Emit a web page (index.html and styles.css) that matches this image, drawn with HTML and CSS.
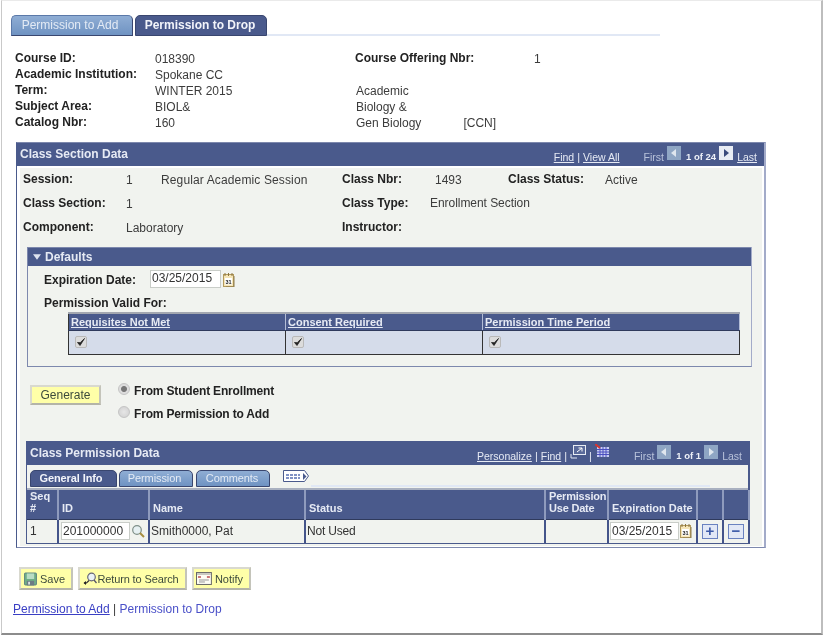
FILE: index.html
```html
<!DOCTYPE html>
<html lang="en">
<head>
<meta charset="utf-8">
<title>Permission to Drop</title>
<link rel="stylesheet" href="styles.css">
</head>
<body>
<div class="frame">
  <div class="tabs page-tabs">
    <a class="tab">Permission to Add</a>
    <a class="tab active">Permission to Drop</a>
    <span class="tab-line"></span>
  </div>

  <div class="info">
    <b>Course ID:</b><span>018390</span><b>Course Offering Nbr:</b><span>1</span>
    <b>Academic Institution:</b><span>Spokane CC</span><span></span><span></span>
    <b>Term:</b><span>WINTER 2015</span><span class="col3">Academic</span><span></span>
    <b>Subject Area:</b><span>BIOL&amp;</span><span class="col3">Biology &amp;</span><span></span>
    <b>Catalog Nbr:</b><span>160</span><span class="col3 gen">Gen Biology<i>[CCN]</i></span><span></span>
  </div>

  <section class="section">
    <header class="bar">
      <strong>Class Section Data</strong>
      <nav class="pager">
        <a>Find</a><em>|</em><a>View All</a>
        <span class="first">First</span>
        <svg class="arrow" viewBox="0 0 14 14"><rect width="14" height="14" fill="#8fa6c4"/><path d="M9 3v8L4 7z" fill="#dfe6ee"/></svg>
        <b>1 of 24</b>
        <svg class="arrow" viewBox="0 0 14 14"><rect width="14" height="14" fill="#e8ecf4"/><path d="M5 3v8l5-4z" fill="#3a4a7c"/></svg>
        <a class="last">Last</a>
      </nav>
    </header>
    <div class="panel">
      <div class="facts">
        <b>Session:</b><span>1</span><span class="session">Regular Academic Session</span><b>Class Nbr:</b><span>1493</span><b>Class Status:</b><span>Active</span>
        <b>Class Section:</b><span>1</span><span></span><b>Class Type:</b><span class="enroll">Enrollment Section</span><span></span><span></span>
      </div>
      <div class="facts third">
        <b>Component:</b><span>Laboratory</span><b>Instructor:</b>
      </div>

      <section class="defaults">
        <header class="bar small"><svg class="twisty" viewBox="0 0 9 6"><path d="M0 0h9L4.5 6z" fill="#dfe4f0"/></svg><strong>Defaults</strong></header>
        <div class="exp">
          <b>Expiration Date:</b>
          <span class="field date">03/25/2015</span>
          <svg class="cal" viewBox="0 0 12 14"><rect x=".5" y="1.5" width="10" height="12" fill="#f6e6b8" stroke="#b39a5c"/><path d="M2 0v3M5.500 0v3M9 0v3" stroke="#8a7440"/><rect x="2" y="5" width="7" height="6.500" fill="#fff"/><text x="5.500" y="10.700" class="cal-num">31</text><path d="M11 3v11H3" fill="none" stroke="#8f7c4c"/></svg>
        </div>
        <b class="valid">Permission Valid For:</b>
        <table class="grid valid-grid">
          <thead><tr><th class="c1"><a>Requisites Not Met</a></th><th class="c2"><a>Consent Required</a></th><th><a>Permission Time Period</a></th></tr></thead>
          <tbody><tr>
            <td><span class="check"><svg viewBox="0 0 10 10"><path d="M1.500 5.500l2.500 3 4.500-7-4.300 4.200z" fill="#222" stroke="#222" stroke-width=".8"/></svg></span></td>
            <td><span class="check"><svg viewBox="0 0 10 10"><path d="M1.500 5.500l2.500 3 4.500-7-4.300 4.200z" fill="#222" stroke="#222" stroke-width=".8"/></svg></span></td>
            <td><span class="check"><svg viewBox="0 0 10 10"><path d="M1.500 5.500l2.500 3 4.500-7-4.300 4.200z" fill="#222" stroke="#222" stroke-width=".8"/></svg></span></td>
          </tr></tbody>
        </table>
      </section>

      <div class="generate">
        <button class="btn gen-btn" type="button">Generate</button>
        <div class="radios">
          <label><span class="radio on"></span><b>From Student Enrollment</b></label>
          <label><span class="radio"></span><b>From Permission to Add</b></label>
        </div>
      </div>

      <section class="perm">
        <header class="bar">
          <strong>Class Permission Data</strong>
          <nav class="pager">
            <a>Personalize</a><em>|</em><a>Find</a><em>|</em>
            <svg class="tool" viewBox="0 0 16 14"><path d="M1 9v4h6" fill="none" stroke="#dfe4f0"/><rect x="3.500" y=".5" width="12" height="9" fill="#5a6a9a" stroke="#e8ecf4"/><path d="M7 7l5-4M8.500 3H12v3.500" fill="none" stroke="#fff"/></svg>
            <em>|</em>
            <svg class="tool grid-tool" viewBox="0 0 14 14"><rect x="2" y="3" width="12" height="10" fill="#c8cef0"/><path d="M2 5.500h12M2 8h12M2 10.500h12M5 3v10M8 3v10M11 3v10" stroke="#4a4fc0"/><path d="M0 0l5 4" stroke="#d9332f" stroke-width="2"/></svg>
            <span class="first wide">First</span>
            <svg class="arrow" viewBox="0 0 14 14"><rect width="14" height="14" fill="#8fa6c4"/><path d="M9 3v8L4 7z" fill="#dfe6ee"/></svg>
            <b>1 of 1</b>
            <svg class="arrow" viewBox="0 0 14 14"><rect width="14" height="14" fill="#8fa6c4"/><path d="M5 3v8l5-4z" fill="#dfe6ee"/></svg>
            <span class="first lastdim">Last</span>
          </nav>
        </header>
        <div class="tabs sub-tabs">
          <a class="tab active">General Info</a>
          <a class="tab">Permission</a>
          <a class="tab">Comments</a>
          <svg class="more" viewBox="0 0 27 14"><path d="M.5 1.500h21l4 5.500-4 5.500H.500z" fill="#fff" stroke="#4a5a8c"/><path d="M3 5h14v5H3z" fill="#8092c4"/><path d="M6.500 5v5M10.500 5v5M14.500 5v5M3 7.500h14" stroke="#fff"/><path d="M20 4l3.500 3.500L20 11z" fill="#4a5a8c"/></svg>
          <span class="tab-line"></span>
        </div>
        <table class="grid data-grid">
          <colgroup><col class="w-seq"><col class="w-id"><col class="w-name"><col class="w-status"><col class="w-use"><col class="w-exp"><col class="w-btn"><col class="w-btn"></colgroup>
          <thead><tr><th>Seq<br>#</th><th>ID</th><th>Name</th><th>Status</th><th class="use">Permission<br>Use Date</th><th>Expiration Date</th><th></th><th></th></tr></thead>
          <tbody><tr>
            <td>1</td>
            <td class="cell-flex"><span class="field id">201000000</span><svg class="lens" viewBox="0 0 14 14"><circle cx="6" cy="6" r="4.300" fill="#e6f0f2" stroke="#7f8f88" stroke-width="1.200"/><path d="M9 9l4 4" stroke="#a88f40" stroke-width="2"/></svg></td>
            <td>Smith0000, Pat</td>
            <td class="tight">Not Used</td>
            <td></td>
            <td class="cell-flex"><span class="field date2">03/25/2015</span><svg class="cal" viewBox="0 0 12 14"><rect x=".5" y="1.500" width="10" height="12" fill="#f6e6b8" stroke="#b39a5c"/><path d="M2 0v3M5.500 0v3M9 0v3" stroke="#8a7440"/><rect x="2" y="5" width="7" height="6.500" fill="#fff"/><text x="5.500" y="10.700" class="cal-num">31</text><path d="M11 3v11H3" fill="none" stroke="#8f7c4c"/></svg></td>
            <td class="cell-btn"><span class="rowbtn">+</span></td>
            <td class="cell-btn"><span class="rowbtn">−</span></td>
          </tr></tbody>
        </table>
      </section>
    </div>
  </section>

  <div class="actions">
    <button class="btn save" type="button"><svg class="ico" viewBox="0 0 14 14"><rect x=".5" y=".5" width="13" height="13" rx="1" fill="#6fae86" stroke="#5a7f80"/><rect x="3" y="1" width="8" height="6" fill="#b8dcc4"/><rect x="3" y="9" width="8" height="5" fill="#6c7c84"/><rect x="4.500" y="10" width="2" height="3" fill="#d8e0e0"/></svg>Save</button>
    <button class="btn ret" type="button"><svg class="ico" viewBox="0 0 14 14"><circle cx="8.500" cy="5" r="3.800" fill="#eaf2f6" stroke="#667" stroke-width="1.200"/><path d="M11 8l2.500 3" stroke="#556" stroke-width="1.300"/><path d="M6 8.500l-2.500 2.500H1" fill="none" stroke="#333" stroke-width="1.200"/><path d="M.5 11l2.500-2v4z" fill="#222"/></svg>Return to Search</button>
    <button class="btn notify" type="button"><svg class="ico note" viewBox="0 0 16 13"><rect x=".5" y=".5" width="15" height="12" fill="#fdfdf4" stroke="#666"/><path d="M1 1h14v2H1z" fill="#c9c9c0"/><rect x="2" y="4" width="3" height="2" fill="#c77"/><rect x="11" y="4" width="3" height="2" fill="#c77"/><path d="M3 8h10M3 10h6" stroke="#999"/></svg>Notify</button>
  </div>

  <p class="links"><a class="visited">Permission to Add</a> | <a>Permission to Drop</a></p>
</div>
</body>
</html>
```

FILE: styles.css
```css
* { box-sizing: border-box; }
html, body { margin: 0; background: #fff; }
body { font: 12px/16px "Liberation Sans", Arial, sans-serif; color: #3c3c3c; }
b, strong { font-weight: 700; }

.frame {
  width: 822px; height: 635px; margin-left: 1px; position: relative;
  border: 1px solid #c9c9c9; border-width: 1px 2px 2px 1px;
  border-color: #eaeaea #bdbdbd #8c8c8c #c9c9c9;
  background: #fff;
  padding-top: 14px;
  filter: blur(.3px);
}

.tabs { display: flex; align-items: flex-end; }
.tab {
  display: block; border-radius: 5px 5px 0 0; text-align: center;
  background: linear-gradient(#8fadd4, #6f93c2); color: #e4ebf5;
  border: 1px solid #5a78a8; border-bottom: 1px solid #39466f;
  border-right-color: #39466f;
}
.tab.active {
  background: #4a5a8c; color: #f2f4fa; font-weight: 700;
  border-color: #39466f;
}
.tab-line { height: 2px; background: #e1e8f5; flex: none; }

.page-tabs { height: 21px; padding-left: 9px; }
.page-tabs .tab { height: 21px; line-height: 19px; }
.page-tabs .tab:nth-child(1) { width: 122px; margin-right: 2px; padding-right: 4px; }
.page-tabs .tab:nth-child(2) { width: 132px; padding-right: 2px; }
.page-tabs .tab-line { width: 393px; }

.info {
  display: grid; grid-template-columns: 140px 200px 179px 1fr; grid-auto-rows: 16px;
  margin: 14px 0 0 13px;
}
.info b { color: #222; }
.info span { color: #3c3c3c; padding-top: 1px; }
.info .col3 { padding-left: 1px; }
.gen i { font-style: normal; margin-left: 42px; }

.section {
  width: 750px; margin: 12px 0 0 14px; height: 406px;
  border: 1px solid #4a5a8c; border-right: 2px solid #a3abc9; border-bottom: 1px solid #7d88ad;
  border-top-color: #7d88ad; padding-bottom: 3px; background: #fff;
}
.bar {
  display: flex; justify-content: space-between; align-items: center;
  background: #4a5a8c; color: #e6eaf4; height: 23px; padding: 0 7px 1px 3px;
}
.pager { display: flex; align-items: center; font-size: 10.500px; color: #e6eaf4; white-space: nowrap; padding-top: 5px; }
.pager a { text-decoration: underline; }
.pager em { font-style: normal; margin: 0 3px; font-size: 11px; }
.pager .first { color: #b8c2da; margin-left: 24px; margin-right: 3px; }
.pager .first.wide { margin-left: 25px; }
.pager .first.lastdim { margin-left: 4px; margin-right: 0; }
.pager b { font-size: 9.500px; margin: 0 3px 0 5px; color: #eef1f8; }
.pager .last { margin-left: 4px; }
.arrow { width: 14px; height: 14px; margin-top: -8px; }
.tool { width: 16px; height: 14px; margin-top: -8px; }
.grid-tool { width: 14px; margin-top: -10px; }

.panel {
  height: 378px; margin: 2px 2px 0 3px; background: #f1f3ef; padding-top: 3px;
}
.facts {
  display: grid; height: 48px; grid-auto-rows: 24px; align-items: start;
  grid-template-columns: 103px 35px 181px 93px 73px 97px 1fr;
  padding-left: 3px; white-space: nowrap;
}
.facts b { color: #222; }
.facts span { padding-top: 1px; }
.session { letter-spacing: .13px; }
.tight { letter-spacing: -.2px; }
.facts .enroll { margin-left: -5px; padding-top: 0; letter-spacing: -.05px; }
.facts.third { height: 25px; grid-auto-rows: 25px; grid-template-columns: 103px 216px 1fr; }

.defaults {
  width: 725px; height: 120px; margin: 3px 0 0 7px;
  border: 1px solid #7d88ad; border-top: 0; border-right-color: #a3abc9;
}
.bar.small { height: 19px; justify-content: flex-start; border-top: 1px solid #7d88ad; padding: 0 0 0 5px; gap: 4px; }
.twisty { width: 8px; height: 6px; }
.exp { display: flex; align-items: center; padding-left: 16px; height: 24px; margin-top: 2px; }
.exp b { width: 106px; color: #222; }
.field {
  display: block; background: #fff; border: 1px solid #c9cdc8; color: #333;
  height: 18px; line-height: 15px; padding-left: 1px;
}
.field.date { width: 71px; margin-top: -2px; }
.cal { width: 12px; height: 14px; margin-left: 2px; flex: none; }
.cal-num { font: 700 5.500px "Liberation Sans", Arial, sans-serif; fill: #222; text-anchor: middle; }
.valid { display: block; margin: 3px 0 0 16px; color: #222; }

.grid { border-collapse: collapse; table-layout: fixed; }
.grid th { background: #4a5a8c; color: #e6eaf4; text-align: left; padding: 0 3px; font-size: 11px; font-weight: 700; }
.grid th a { text-decoration: underline; }
.valid-grid { width: 672px; margin: 1px 0 0 40px; border: 1px solid #333; border-top: 2px solid #a3a7b0; }
.valid-grid th { height: 17px; border-right: 1px solid #b4bdd6; border-bottom: 1px solid #2f3a5c; line-height: 14px; padding-left: 2px; }
.valid-grid td { height: 24px; background: #d5dcea; border-right: 1px solid #333; padding: 0 6px; }
.valid-grid .c1 { width: 217px; }
.valid-grid .c2 { width: 197px; }
.check {
  display: block; width: 12px; height: 12px; background: #dcdcdc;
  border: 1px solid #b9b9b9; border-radius: 2px;
}
.check svg { display: block; width: 10px; height: 10px; }

.generate { display: flex; margin: 11px 0 0 10px; height: 63px; }
.btn {
  display: flex; align-items: center; justify-content: center;
  font: 12px "Liberation Sans", Arial, sans-serif; color: #3c4a3c;
  background: #ffffa8; border: 2px solid #d9d9cf; border-bottom-color: #b4b4a8; border-right-color: #c4c4ba;
  padding: 0 6px;
}
.gen-btn { width: 71px; height: 20px; margin-top: 7px; }
.radios { margin-left: 17px; display: flex; flex-direction: column; gap: 7px; padding-top: 5px; }
.radios label { display: flex; align-items: center; gap: 4px; height: 16px; color: #222; letter-spacing: -.17px; }
.radio {
  width: 12px; height: 12px; border-radius: 50%; border: 1px solid #c4c4c4; margin-top: -4px;
  background: radial-gradient(circle, #e6e6e6, #cfcfcf);
}
.radio.on { background: radial-gradient(circle, #777 0 2.5px, #ddd 3.500px); }

.perm { width: 724px; height: 103px; margin: 0 0 0 6px; background: #4a5a8c; padding-bottom: 1px; }
.perm .bar { height: 24px; padding: 0 8px 0 4px; }
.sub-tabs { height: 25px; background: #f1f3ef; margin-right: 2px; padding-left: 3px; margin-left: 1px; border-bottom: 2px solid #a9b0c0; position: relative; }
.sub-tabs .tab { height: 17px; line-height: 14px; font-size: 11px; margin-right: 2px; margin-bottom: 1px; letter-spacing: -.1px; border-color: #39466f; }
.sub-tabs .tab:nth-child(1) { width: 87px; padding-right: 5px; }
.sub-tabs .tab:nth-child(2) { width: 74px; margin-right: 3px; padding-right: 3px; }
.sub-tabs .tab:nth-child(3) { width: 74px; padding-right: 2px; }
.more { width: 27px; height: 14px; margin: 0 0 5px 11px; }
.sub-tabs .tab-line { position: absolute; left: 284px; width: 399px; bottom: 1px; }

.data-grid { width: 723px; margin-left: 1px; }
.w-seq { width: 31px; } .w-id { width: 91px; } .w-name { width: 156px; } .w-status { width: 240px; }
.w-use { width: 63px; } .w-exp { width: 89px; } .w-btn { width: 26px; }
.data-grid th { height: 29px; vertical-align: bottom; line-height: 12px; border-right: 2px solid #8f9bbd; border-bottom: 1px solid #2f3a5c; padding: 0 2px 5px 3px; }
.data-grid th.use { letter-spacing: -.2px; }
.data-grid td { height: 23px; background: #f1f3ef; border-right: 2px solid #44548a; padding: 0 1px 1px; color: #333; white-space: nowrap; }
.data-grid td:first-child { padding-left: 3px; }
.cell-flex .field { display: inline-block; vertical-align: middle; height: 18px; line-height: 16px; font-size: 12px; }
.field.id { width: 69px; margin-left: 1px; }
.field.date2 { width: 69px; }
.lens { width: 14px; height: 14px; vertical-align: middle; margin-left: 1px; }
.cell-flex .cal { vertical-align: middle; margin-left: 1px; }
.cell-btn { text-align: center; }
.rowbtn {
  display: inline-block; width: 16px; height: 15px; line-height: 11px; background: #e2e8f6;
  border: 1px solid #6a82c0; color: #3c5aa8; font-size: 15px; font-weight: 700; vertical-align: middle;
}

.actions { display: flex; gap: 5px; margin: 19px 0 0 17px; }
.actions .btn { height: 23px; padding: 0 6px 0 3px; font-size: 11px; }
.actions .save { width: 54px; }
.actions .ret { width: 109px; }
.actions .notify { width: 59px; }
.ico { width: 14px; height: 14px; margin-right: 3px; }
.note { width: 16px; height: 13px; margin-left: -1px; margin-right: 3px; }
.ret { letter-spacing: -.12px; }
.actions .ret { padding: 0 5px 0 2px; }
.ret .ico { margin-right: 0; }

.links { margin: 11px 0 0 11px; color: #3c3c3c; }
.links a { color: #4a50c8; }
.links .visited { text-decoration: underline; color: #3a3fc4; }
```
